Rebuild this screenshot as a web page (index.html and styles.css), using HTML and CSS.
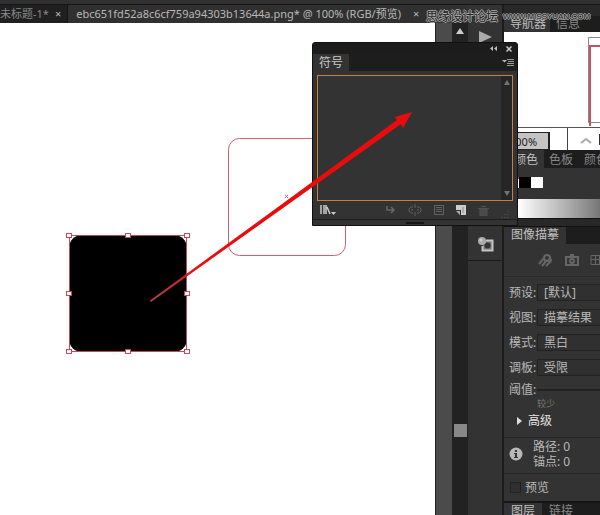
FILE: index.html
```html
<!DOCTYPE html>
<html lang="zh-CN">
<head>
<meta charset="utf-8">
<title>符号</title>
<link rel="stylesheet" href="styles.css">
</head>
<body>
<div class="app">
  <div class="topbar"></div>
  <div class="workspace">
    <main class="document">
      <div class="doc-tabs">
        <div class="doc-tab first"><span>未标题-1*</span><button class="close" aria-label="关闭">×</button></div>
        <div class="doc-tab active"><span>ebc651fd52a8c6cf759a94303b13644a.png* @ 100% (RGB/预览)</span><button class="close" aria-label="关闭">×</button></div>
      </div>
      <div class="doc-body">
        <div class="canvas">
          <svg width="435" height="492" viewBox="0 23 435 492" fill="none">
            <rect x="69.500" y="235.500" width="117" height="116" rx="11" fill="#000"/>
            <rect x="228.500" y="138.500" width="117" height="117" rx="11" stroke="#d0606a"/>
            <path d="M285 195l3 3m0-3l-3 3" stroke="#c4646c"/>
            <rect x="69.500" y="235.500" width="117" height="116" stroke="#c8475a"/>
            <g fill="#fff" stroke="#c8485a">
              <rect x="66.500" y="233.500" width="5" height="4"/><rect x="125.500" y="233.500" width="5" height="4"/><rect x="184.500" y="233.500" width="5" height="4"/>
              <rect x="66.500" y="291.500" width="5" height="4"/><rect x="184.500" y="291.500" width="5" height="4"/>
              <rect x="66.500" y="349.500" width="5" height="4"/><rect x="125.500" y="349.500" width="5" height="4"/><rect x="184.500" y="349.500" width="5" height="4"/>
            </g>
          </svg>
        </div>
        <div class="gutter"></div>
        <div class="scrollbar">
          <svg width="8" height="6" viewBox="0 0 8 6"><path d="M4 0l4 6H0z" fill="#ccc"/></svg>
          <div class="thumb"></div>
        </div>
      </div>
    </main>

    <aside class="dock">
      <div class="dock-play"><svg width="13" height="12" viewBox="0 0 13 12"><path d="M0 0l13 6L0 12z" fill="#aaa"/></svg></div>
      <div class="dock-symbol">
        <svg width="17" height="16" viewBox="0 0 17 16"><path d="M9 4.500h6.500v10h-10V10" fill="#777" stroke="#c4c4c4" stroke-width="2"/><circle cx="10.500" cy="9.500" r="3" fill="#333"/><circle cx="5" cy="5" r="4" fill="#aaa"/><circle cx="4" cy="4" r="1.500" fill="#ccc"/></svg>
      </div>
    </aside>

    <aside class="panels">
      <section>
        <div class="tabs nav-tabs"><span class="tab active">导航器</span><span class="tab">信息</span></div>
        <div class="navigator">
          <svg width="96" height="95" viewBox="0 0 96 95" fill="none"><path d="M96 5.500H84.500V90.500H96" stroke="#888"/><path d="M96 14H86V94" stroke="#c85064" stroke-width="2"/></svg>
        </div>
        <div class="nav-status"><input class="zoom-field" value="100%" aria-label="缩放"><span class="nav-sep"></span>
          <svg width="32" height="20" viewBox="0 0 32 20"><path d="M13 15l5-4 5 4" fill="none" stroke="#aaa" stroke-width="2"/><path d="M31 6h1v11h-1z" fill="#333"/></svg>
        </div>
      </section>
      <section>
        <div class="tabs color-tabs"><span class="tab active">颜色</span><span class="tab">色板</span><span class="tab">颜色</span></div>
        <div class="swatches"><i class="swatch none"></i><i class="swatch black"></i><i class="swatch white"></i></div>
        <div class="ramp"></div>
        <div class="panel-end"></div>
      </section>
      <section>
        <div class="tabs trace-tabs"><span class="tab active">图像描摹</span></div>
        <div class="trace-icons">
          <svg width="16" height="14" viewBox="0 0 16 14" fill="none" stroke="#666" stroke-width="2"><path d="M1 11l5-6M4 13l5-6M8 13l5-5"/><circle cx="9" cy="5" r="3"/><circle cx="12" cy="7" r="1"/></svg>
          <svg width="14" height="14" viewBox="0 0 14 14" fill="none" stroke="#666" stroke-width="2"><path d="M1 4h12v8H1zM5 2h4"/><circle cx="7" cy="8" r="2"/></svg>
          <svg width="14" height="14" viewBox="0 0 14 14" fill="none" stroke="#666"><path d="M1 2.500h12v9H1zM1 6.500h12M5.500 2v9M9.500 2v9"/></svg>
        </div>
        <form class="trace">
          <div class="row"><label for="preset">预设:</label><select id="preset"><option>[默认]</option></select></div>
          <div class="row"><label for="view">视图:</label><select id="view"><option>描摹结果</option></select></div>
          <div class="row"><label for="mode">模式:</label><select id="mode"><option>黑白</option></select></div>
          <div class="row"><label for="palette">调板:</label><select id="palette"><option>受限</option></select></div>
          <div class="row slider"><label for="threshold">阈值:</label><input type="range" id="threshold" min="0" max="255"></div>
          <div class="less">较少</div>
          <button type="button" class="advanced"><svg width="5" height="8" viewBox="0 0 5 8"><path d="M0 0l5 4-5 4z" fill="#ddd"/></svg>高级</button>
          <div class="info">
            <svg width="14" height="14" viewBox="0 0 14 14"><circle cx="7" cy="7" r="6.500" fill="#b8b8b8"/><path d="M6 3h2v2H6zM5 6h3v4h1v1H5v-1h1V7H5z" fill="#333"/></svg>
            <div><div>路径: 0</div><div>锚点: 0</div></div>
          </div>
          <div class="preview"><input type="checkbox" id="preview"><label for="preview">预览</label></div>
        </form>
      </section>
      <section>
        <div class="tabs layer-tabs"><span class="tab active">图层</span><span class="tab">链接</span></div>
      </section>
    </aside>
  </div>

  <div class="watermark"><span class="mark-name">思缘设计论坛</span><span class="mark-url">WWW.MISSYUAN.COM</span></div>

  <section class="symbols">
    <div class="symbols-title">
      <button aria-label="折叠"><svg width="7" height="5" viewBox="0 0 7 5"><path d="M3 0v5L0 2.500zM7 0v5L4 2.500z" fill="#bbb"/></svg></button>
      <button aria-label="关闭"><svg width="6" height="6" viewBox="0 0 6 6"><path d="M0.500 0.500l5 5m0-5l-5 5" stroke="#ccc" stroke-width="1.500"/></svg></button>
    </div>
    <div class="symbols-tabs"><span class="symbols-tab">符号</span>
      <button aria-label="菜单"><svg width="12" height="8" viewBox="0 0 12 8"><path d="M0 2h5L2.500 4.500z" fill="#bbb"/><path d="M5 1.500h7M6 3.500h6M5 5.500h7M5 7.500h7" stroke="#999"/></svg></button>
    </div>
    <div class="symbols-list"><div class="list-scroll">
      <svg width="6" height="5" viewBox="0 0 6 5"><path d="M3 0l3 5H0z" fill="#6c7474"/></svg>
      <svg width="6" height="5" viewBox="0 0 6 5"><path d="M0 0h6L3 5z" fill="#6c7474"/></svg>
    </div></div>
    <div class="symbols-tools">
      <button class="library" aria-label="符号库"><svg width="16" height="10" viewBox="0 0 16 10"><path d="M1 0v9M4 0v9M6 0v9M7 2l3 7" fill="none" stroke="#ccc" stroke-width="1.500"/><path d="M11 7h5l-2.500 3z" fill="#ccc"/></svg></button>
      <button aria-label="置入"><svg width="10" height="10" viewBox="0 0 10 10"><path d="M1 1v4h7M5 2l3 3-3 3" fill="none" stroke="#666" stroke-width="1.500"/></svg></button>
      <button aria-label="断开链接"><svg width="14" height="12" viewBox="0 0 14 12"><path d="M5 3H3L1 5v2l2 2h2M9 3h2l2 2v2l-2 2H9M7 0v4M7 8v4M3 6h2M9 6h2" fill="none" stroke="#606060"/></svg></button>
      <button aria-label="选项"><svg width="10" height="10" viewBox="0 0 10 10"><path d="M0 .5h10M0 9.500h10M.5 0v10M9.500 0v10M2 2.500h6M2 4.500h6M2 6.500h6" fill="none" stroke="#606060"/></svg></button>
      <button aria-label="新建"><svg width="10" height="10" viewBox="0 0 10 10"><path d="M0 0h10v10H5V5H0z" fill="#ccc"/><path d="M0 6h4v4z" fill="#aaa"/><path d="M7 2v6" stroke="#888"/></svg></button>
      <button aria-label="删除"><svg width="11" height="11" viewBox="0 0 11 11"><path d="M0 3.500h11M3 1.500h5M2 4h7v7H2z" stroke="#505050" fill="#4a4a4a"/></svg></button>
      <svg class="grip" width="8" height="8" viewBox="0 0 8 8"><path d="M7 1v1M4 4v1M7 4v1M1 7v1M4 7v1M7 7v1" stroke="#555"/></svg>
    </div>
    <div class="symbols-foot"><i></i></div>
  </section>

  <svg class="arrow" width="270" height="195" viewBox="0 0 270 195">
    <defs><linearGradient id="tail" gradientUnits="userSpaceOnUse" x1="0" y1="189" x2="50" y2="153"><stop offset="0" stop-color="#a84850"/><stop offset="1" stop-color="#ea0c0c"/></linearGradient></defs>
    <path d="M0 188.500L247 8l-2-3 17-5-9 16-2-4L1 190z" fill="url(#tail)"/>
  </svg>
</div>
</body>
</html>
```
FILE: styles.css
```css
* { box-sizing: border-box; }
body {
  margin: 0;
  background: #333;
  color: #b8b8b8;
  font: 12px/16px "Noto Sans", "Noto Sans CJK SC", sans-serif;
}
button { padding: 0; border: 0; background: none; color: inherit; font: inherit; display: flex; }
svg { display: block; flex: none; }
.app {
  position: relative;
  min-height: 100vh;
  display: flex;
  flex-direction: column;
  overflow: hidden;
}
.topbar { height: 5px; background: #303030; border-bottom: 1px solid #151515; }
.workspace { flex: 1; display: flex; background: #1c1c1c; }

.document { flex: 1; min-width: 0; display: flex; flex-direction: column; }
.doc-tabs { height: 18px; display: flex; background: #303030; white-space: nowrap; font-size: 11px; line-height: 18px; }
.doc-tab { display: flex; gap: 12px; padding: 0 8px; background: #303030; }
.doc-tab.first { gap: 6px; padding: 0 6px 0 0; background: #202020; color: #888; border-right: 1px solid #151515; }
.close { line-height: 18px; color: #bbb; }
.doc-body { flex: 1; display: flex; }
.canvas { flex: 1; min-width: 0; overflow: hidden; background: #fff; }
.gutter { width: 17px; background: #4b4b4b; border-left: 1px solid #222; }
.scrollbar {
  width: 16px;
  display: flex;
  flex-direction: column;
  align-items: center;
  justify-content: space-between;
  padding: 5px 1px 78px;
  background: #222;
}
.thumb { width: 13px; height: 13px; margin-bottom: 4px; background: #888; }

.dock { width: 34px; margin-right: 2px; background: #333; }
.dock-play { height: 221px; padding: 26px 0 0 11px; border-bottom: 1px solid #181818; }
.dock-symbol { height: 35px; padding: 10px 0 0 9px; border-bottom: 1px solid #1a1a1a; }

.panels { width: 96px; background: #333; overflow: hidden; white-space: nowrap; }
.tabs { display: flex; background: #1d1d1d; color: #888; height: 18px; line-height: 16px; }
.tab { padding: 0 7px; }
.tab.active { background: #333; color: #c0c0c0; }
.nav-tabs { height: 27px; border-top: 11px solid #282828; }
.nav-tabs .tab { padding: 0 4px 0 6px; }
.navigator { height: 95px; background: #fff; }
.nav-status { display: flex; height: 23px; background: #fff; border-top: 1px solid #555; }
.zoom-field {
  width: 46px;
  height: 18px;
  margin-top: 4px;
  padding: 0 0 0 4px;
  background: #c4c4c4;
  border: 1px solid #222;
  border-right-width: 2px;
  color: #222;
  font: 11px/14px "Noto Sans", sans-serif;
}
.nav-sep { width: 18px; border-right: 1px solid #444; }
.color-tabs .tab { padding: 2px 6px 0 5px; }
.color-tabs .active { padding-left: 10px; }
.swatches { display: flex; height: 31px; padding: 9px 0 0 3px; }
.swatch { width: 12px; height: 11px; }
.swatch.none { background: linear-gradient(135deg, #fff 40%, #d22 40%, #d22 60%, #fff 60%); }
.swatch.black { background: #000; }
.swatch.white { background: #fff; }
.ramp { height: 19px; background: linear-gradient(90deg, #fff 15%, #777); }
.panel-end { height: 9px; background: #282828; border-top: 1px solid #111; border-bottom: 1px solid #111; }
.trace-tabs { height: 17px; }
.trace-icons { display: flex; gap: 11px; height: 33px; padding: 9px 0 0 34px; border-bottom: 1px solid #2a2a2a; }
.trace { padding-top: 3px; }
.row { display: flex; align-items: center; height: 25px; padding-left: 5px; }
.row label { width: 28px; flex: none; }
.row select {
  appearance: none;
  width: 96px;
  flex: none;
  height: 17px;
  padding: 0 6px;
  background: #303030;
  border: 1px solid #222;
  color: #b8b8b8;
  font: inherit;
  line-height: 15px;
}
.slider { height: 20px; }
.slider input { appearance: none; width: 96px; flex: none; height: 2px; margin: 0; background: #222; }
.slider input::-webkit-slider-thumb { appearance: none; width: 1px; height: 1px; }
.less { padding-left: 33px; font-size: 9px; line-height: 8px; color: #777; }
.advanced { width: 100%; height: 30px; padding: 0 0 4px 13px; align-items: center; gap: 6px; color: #e4e4e4; border-bottom: 1px solid #252525; }
.info { display: flex; align-items: center; gap: 10px; height: 36px; padding: 0 0 4px 5px; line-height: 15px; border-bottom: 1px solid #252525; }
.preview { display: flex; align-items: center; height: 27px; padding-left: 6px; gap: 4px; }
.preview input { appearance: none; width: 11px; height: 11px; margin: 0; background: #303030; border: 1px solid #222; }
.layer-tabs { border-top: 2px solid #151515; }

.watermark {
  position: absolute;
  top: 8px;
  left: 426px;
  display: flex;
  align-items: center;
  gap: 5px;
  color: #222;
  line-height: 18px;
  white-space: nowrap;
  text-shadow: 1px 0 #aaa, -1px 0 #aaa, 0 1px #aaa, 0 -1px #aaa;
}
.mark-url { font: 8px/18px "Liberation Sans", sans-serif; }

.symbols {
  position: absolute;
  top: 42px;
  left: 312px;
  width: 206px;
  background: #333;
  border: 1px solid #111;
  border-radius: 3px 3px 0 0;
}
.symbols-title { height: 11px; display: flex; align-items: center; justify-content: flex-end; gap: 9px; padding-right: 5px; background: #1c1c1c; }
.symbols-tabs { height: 17px; display: flex; align-items: center; justify-content: space-between; padding-right: 3px; background: #1d1d1d; border-bottom: 1px solid #182028; }
.symbols-tab { padding: 0 6px; line-height: 17px; background: #333; color: #c8c8c8; }
.symbols-list { height: 126px; margin: 4px 4px 0; display: flex; justify-content: flex-end; border: 1px solid #c87f40; }
.list-scroll { width: 11px; display: flex; flex-direction: column; align-items: center; justify-content: space-between; padding: 4px 0; background: #262626; }
.symbols-tools { display: flex; align-items: center; height: 18px; padding: 0 4px 0 7px; gap: 12px; }
.library { margin-right: 38px; }
.grip { margin-top: 7px; }
.symbols-foot { display: flex; justify-content: center; align-items: center; height: 6px; border-top: 1px solid #1d1d1d; }
.symbols-foot i { width: 18px; height: 2px; background: #151515; }

.arrow { position: absolute; top: 112px; left: 150px; pointer-events: none; }
```
